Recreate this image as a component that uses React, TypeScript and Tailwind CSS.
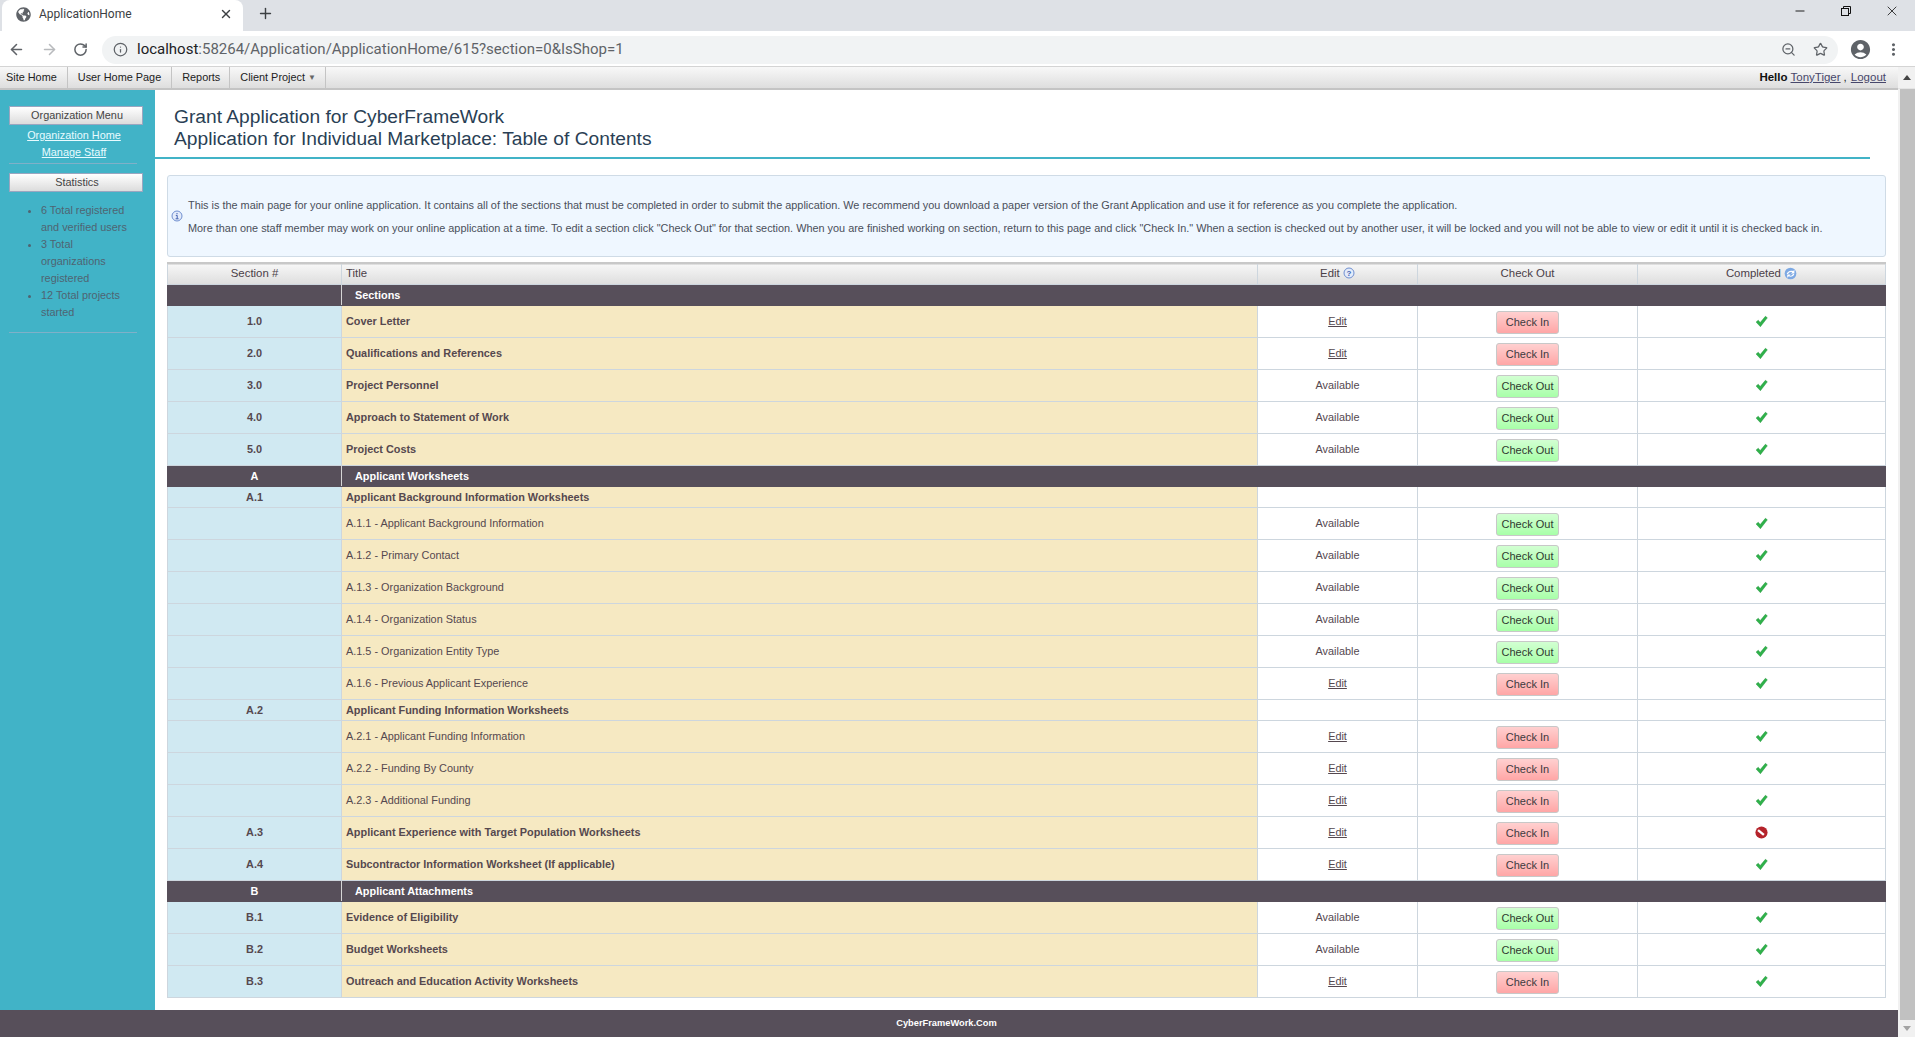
import { ArrowLeft, ArrowRight, Info, Minus, Plus, RotateCw, Star, X, ZoomOut } from "lucide-react"
import { FaGlobeAmericas } from "react-icons/fa"
import { MdAccountCircle, MdMoreVert } from "react-icons/md"

type Row = {
  kind: "dark" | "group" | "bold" | "sub"
  num?: string
  title: string
  state?: "in" | "out"
  done?: boolean
}

const rows: Row[] = [
  { kind: "dark", title: "Sections" },
  { kind: "bold", num: "1.0", title: "Cover Letter", state: "in", done: true },
  { kind: "bold", num: "2.0", title: "Qualifications and References", state: "in", done: true },
  { kind: "bold", num: "3.0", title: "Project Personnel", state: "out", done: true },
  { kind: "bold", num: "4.0", title: "Approach to Statement of Work", state: "out", done: true },
  { kind: "bold", num: "5.0", title: "Project Costs", state: "out", done: true },
  { kind: "dark", num: "A", title: "Applicant Worksheets" },
  { kind: "group", num: "A.1", title: "Applicant Background Information Worksheets" },
  { kind: "sub", title: "A.1.1 - Applicant Background Information", state: "out", done: true },
  { kind: "sub", title: "A.1.2 - Primary Contact", state: "out", done: true },
  { kind: "sub", title: "A.1.3 - Organization Background", state: "out", done: true },
  { kind: "sub", title: "A.1.4 - Organization Status", state: "out", done: true },
  { kind: "sub", title: "A.1.5 - Organization Entity Type", state: "out", done: true },
  { kind: "sub", title: "A.1.6 - Previous Applicant Experience", state: "in", done: true },
  { kind: "group", num: "A.2", title: "Applicant Funding Information Worksheets" },
  { kind: "sub", title: "A.2.1 - Applicant Funding Information", state: "in", done: true },
  { kind: "sub", title: "A.2.2 - Funding By County", state: "in", done: true },
  { kind: "sub", title: "A.2.3 - Additional Funding", state: "in", done: true },
  { kind: "bold", num: "A.3", title: "Applicant Experience with Target Population Worksheets", state: "in", done: false },
  { kind: "bold", num: "A.4", title: "Subcontractor Information Worksheet (If applicable)", state: "in", done: true },
  { kind: "dark", num: "B", title: "Applicant Attachments" },
  { kind: "bold", num: "B.1", title: "Evidence of Eligibility", state: "out", done: true },
  { kind: "bold", num: "B.2", title: "Budget Worksheets", state: "out", done: true },
  { kind: "bold", num: "B.3", title: "Outreach and Education Activity Worksheets", state: "in", done: true },
]

function CheckMark() {
  return (
    <svg viewBox="0 0 12 12" className="mx-auto h-[13px] w-[13px]">
      <path d="M1 6.5 3 4.8 4.8 7 9.6 1.2 11.4 2.6 5 10.8Z" fill="#2fb24a" stroke="#1f8f38" strokeWidth="0.4" />
    </svg>
  )
}

function Blocked() {
  return (
    <svg viewBox="0 0 12 12" className="mx-auto h-[13px] w-[13px]">
      <circle cx="6" cy="6" r="5.6" fill="#b5232b" />
      <path d="M2.8 3.8 8.2 8.2" stroke="#fff" strokeWidth="2.2" />
    </svg>
  )
}

function HelpIcon() {
  return (
    <svg viewBox="0 0 12 12" className="inline-block h-[12px] w-[12px] align-[-2px]">
      <circle cx="6" cy="6" r="5" fill="#e3ebfa" stroke="#6f8fd0" strokeWidth="1" />
      <text x="6" y="9" textAnchor="middle" fontSize="8" fontWeight="700" fill="#3f5fb0" fontFamily="Liberation Sans">?</text>
    </svg>
  )
}

function RefreshIcon() {
  return (
    <svg viewBox="0 0 12 12" className="inline-block h-[13px] w-[13px] align-[-3px]">
      <circle cx="6" cy="6" r="5.4" fill="#7ea9e3" />
      <path d="M2.5 6.5C3 4 6 2.6 8.6 3.8L9.6 2.4V6H6.4L7.6 4.9C6 4.3 4.2 5 3.8 6.5Z" fill="#fff" />
      <path d="M9.5 6.5C9 8.6 6.4 9.6 4.4 8.6L3 10V7H6.2L5 8C6.2 8.4 7.6 8 8.2 6.5Z" fill="#fff" />
    </svg>
  )
}

function ActionButton({ state }: { state: "in" | "out" }) {
  return (
    <button
      className={
        state === "in"
          ? "mt-[2px] h-[23px] w-[63px] rounded-[3px] border border-[#c8c8c8] bg-gradient-to-b from-[#ffd0d0] to-[#ffa6a6] text-[11px] text-[#3d3a40]"
          : "mt-[2px] h-[23px] w-[63px] rounded-[3px] border border-[#c8c8c8] bg-gradient-to-b from-[#d2ffd2] to-[#a8ffa8] text-[11px] text-[#2f3a30]"
      }
    >
      {state === "in" ? "Check In" : "Check Out"}
    </button>
  )
}

function BrowserChrome() {
  return (
    <div className="font-['Roboto',sans-serif]">
      <div className="flex h-[31px] bg-[#dee1e6]">
        <div className="ml-[2px] flex h-[31px] w-[241px] items-center rounded-t-[8px] bg-white pb-[3px] pl-[14px] pr-[10px]">
          <FaGlobeAmericas className="h-[15px] w-[15px] text-[#5f6368]" />
          <span className="ml-[8px] flex-1 text-[12px] text-[#3c4043]">ApplicationHome</span>
          <X className="h-[14px] w-[14px] text-[#3c4043]" strokeWidth={2.4} />
        </div>
        <Plus className="ml-[14px] mt-[5px] h-[17px] w-[17px] text-[#3c4043]" strokeWidth={2} />
        <div className="ml-auto flex">
          <button className="flex h-[22px] w-[46px] items-center justify-center text-[#111]">
            <Minus className="h-[14px] w-[14px]" strokeWidth={1.6} />
          </button>
          <button className="flex h-[22px] w-[46px] items-center justify-center text-[#111]">
            <svg viewBox="0 0 10 10" className="h-[10px] w-[10px]" fill="none" stroke="currentColor" strokeWidth="1">
              <rect x="0.5" y="2.5" width="7" height="7" />
              <path d="M2.5 2.5V.5h7v7h-2" />
            </svg>
          </button>
          <button className="flex h-[22px] w-[46px] items-center justify-center text-[#111]">
            <X className="h-[16px] w-[16px]" strokeWidth={1.2} />
          </button>
        </div>
      </div>
      <div className="flex h-[36px] items-center border-b border-[#d4d4d4] bg-white pt-[2px]">
        <ArrowLeft className="ml-[8px] h-[17px] w-[17px] text-[#5f6368]" strokeWidth={2.2} />
        <ArrowRight className="ml-[16px] h-[17px] w-[17px] text-[#b8babd]" strokeWidth={2.2} />
        <RotateCw className="ml-[15px] h-[15px] w-[15px] text-[#5f6368]" strokeWidth={2.4} />
        <div className="ml-[14px] flex h-[28px] w-[1736px] items-center rounded-full bg-[#f1f3f4] pl-[11px]">
          <Info className="h-[15px] w-[15px] text-[#5f6368]" strokeWidth={2} />
          <span className="ml-[9px] text-[15px] text-[#5f6368]">
            <span className="text-[#202124]">localhost</span>:58264/Application/ApplicationHome/615?section=0&amp;IsShop=1
          </span>
          <ZoomOut className="ml-auto h-[15px] w-[15px] text-[#5f6368]" strokeWidth={2} />
          <Star className="ml-[17px] mr-[10px] h-[15px] w-[15px] text-[#5f6368]" strokeWidth={2} />
        </div>
        <MdAccountCircle className="ml-[11px] h-[23px] w-[23px] text-[#5f6368]" />
        <MdMoreVert className="ml-[12px] h-[19px] w-[19px] text-[#5f6368]" />
      </div>
    </div>
  )
}

function NavBar() {
  return (
    <div className="flex h-[23px] items-stretch border-b-2 border-[#c4c4c4] bg-gradient-to-b from-[#f8f8f8] to-[#dedede] text-[10.88px] text-[#222]">
      <a className="flex items-center border-r border-[#c4c4c4] pl-[6px] pr-[10px]">Site Home</a>
      <a className="flex items-center border-r border-[#c4c4c4] px-[10px]">User Home Page</a>
      <a className="flex items-center border-r border-[#c4c4c4] pl-[10px] pr-[9px]">Reports</a>
      <a className="flex items-center border-r border-[#c4c4c4] pl-[10px] pr-[9px]">
        Client Project <span className="ml-[3px] text-[8px] text-[#666]">▼</span>
      </a>
      <div className="ml-auto flex items-center pr-[12px] text-[11.5px]">
        <span className="font-bold text-[#111]">Hello</span>
        <a className="ml-[3px] text-[#47476b] underline">TonyTiger</a>
        <span className="ml-[3px] mr-[4px]">,</span>
        <a className="text-[#47476b] underline">Logout</a>
      </div>
    </div>
  )
}

function Sidebar() {
  const boxBtn =
    "mx-[9px] flex h-[19px] w-[134px] items-center justify-center border border-[#9aa6c0] bg-gradient-to-b from-white to-[#dcdcdc] pl-[2px] text-[10.88px] text-[#444]"
  return (
    <aside className="w-[155px] shrink-0 bg-[#41b3c7] pt-[16px] text-[10.88px]">
      <div className={boxBtn}>Organization Menu</div>
      <div className="mx-[9px] w-[128px] border-b border-[#7fb0c8] pb-[2px] pl-[2px] pt-[2px] text-center font-medium leading-[17px] text-[#e8fbff]">
        <a className="block underline">Organization Home</a>
        <a className="block underline">Manage Staff</a>
      </div>
      <div className={`${boxBtn} mt-[9px]`}>Statistics</div>
      <ul className="mx-[9px] mt-[10px] w-[128px] list-disc border-b border-[#7fb0c8] pb-[11px] pl-[32px] leading-[17px] text-[#4f6472] marker:text-[#4f6472]">
        <li>6 Total registered and verified users</li>
        <li>3 Total organizations registered</li>
        <li>12 Total projects started</li>
      </ul>
    </aside>
  )
}

function SectionTable() {
  const cell = "border border-[#cdd6de]"
  return (
    <table className="mt-[5px] w-[1719px] table-fixed border-collapse text-[10.88px] text-[#55484f]">
      <colgroup>
        <col className="w-[174px]" />
        <col className="w-[916px]" />
        <col className="w-[160px]" />
        <col className="w-[220px]" />
        <col />
      </colgroup>
      <thead>
        <tr className="h-[21px] border-t-2 border-[#c8c8c8] bg-gradient-to-b from-[#f6f6f6] to-[#dedede] text-[11.4px] text-[#4a4048]">
          <th className={`${cell} text-center font-normal`}>Section #</th>
          <th className={`${cell} pl-[4px] text-left font-normal`}>Title</th>
          <th className={`${cell} text-center font-normal`}>
            Edit <HelpIcon />
          </th>
          <th className={`${cell} text-center font-normal`}>Check Out</th>
          <th className={`${cell} text-center font-normal`}>
            Completed <RefreshIcon />
          </th>
        </tr>
      </thead>
      <tbody>
        {rows.map((r) => {
          if (r.kind === "dark") {
            return (
              <tr key={r.title} className="h-[21px] bg-[#574f5a] font-bold text-white">
                <td className="border border-[#574f5a] border-r-[#d5d5d5] pt-[1px] text-center">{r.num}</td>
                <td colSpan={4} className="border border-[#574f5a] pl-[13px] pt-[1px]">
                  {r.title}
                </td>
              </tr>
            )
          }
          const isGroup = r.kind === "group"
          return (
            <tr key={r.title} className={isGroup ? "h-[21px]" : "h-[32px]"}>
              <td className={`${cell} bg-[#d0e9f2] text-center font-bold ${isGroup ? "pt-[1px]" : ""}`}>{r.num}</td>
              <td className={`${cell} bg-[#f6e9c2] pl-[4px] ${r.kind === "sub" ? "font-normal" : "font-bold"} ${isGroup ? "pt-[1px]" : ""}`}>{r.title}</td>
              <td className={`${cell} text-center`}>
                {r.state === "in" && <a className="underline">Edit</a>}
                {r.state === "out" && "Available"}
              </td>
              <td className={`${cell} text-center`}>{r.state && <ActionButton state={r.state} />}</td>
              <td className={cell}>{r.state && (r.done ? <CheckMark /> : <Blocked />)}</td>
            </tr>
          )
        })}
      </tbody>
    </table>
  )
}

export default function App() {
  return (
    <div className="flex h-screen w-full flex-col overflow-hidden bg-white font-['Liberation_Sans',Arial,sans-serif]">
      <BrowserChrome />
      <div className="flex min-h-0 flex-1">
        <div className="flex min-w-0 flex-1 flex-col">
          <NavBar />
          <div className="flex min-h-0 flex-1">
            <Sidebar />
            <main className="min-w-0 flex-1">
              <div className="mr-[28px] border-b-2 border-[#41b3c7] pb-[7px] pl-[19px] pt-[16px] text-[19.2px] leading-[22px] text-[#2a3f55]">
                <div>Grant Application for CyberFrameWork</div>
                <div>Application for Individual Marketplace: Table of Contents</div>
              </div>
              <div className="ml-[12px] mt-[16px] flex h-[82px] w-[1719px] items-center rounded-[3px] border border-[#cfdbe6] bg-[#eff7ff] pl-[3px] text-[10.88px] text-[#4a4f5a]">
                <svg viewBox="0 0 12 12" className="h-[12px] w-[12px] shrink-0">
                  <circle cx="6" cy="6" r="5" fill="#e3ebfa" stroke="#6f8fd0" strokeWidth="1" />
                  <path d="M6 3v1.2M4.8 5.4H6.2V8.6M4.6 8.8h3" stroke="#3f5fb0" strokeWidth="1" fill="none" />
                </svg>
                <div className="ml-[5px] mt-[2px] leading-[23px]">
                  <p>
                    This is the main page for your online application. It contains all of the sections that must be completed in order to submit the application. We recommend you download a paper version of the Grant Application and use it for reference as you complete the application.
                  </p>
                  <p>
                    More than one staff member may work on your online application at a time. To edit a section click "Check Out" for that section. When you are finished working on section, return to this page and click "Check In." When a section is checked out by another user, it will be locked and you will not be able to view or edit it until it is checked back in.
                  </p>
                </div>
              </div>
              <div className="ml-[12px]">
                <SectionTable />
              </div>
            </main>
          </div>
          <footer className="flex h-[27px] items-center justify-center bg-[#574f5a] pr-[5px] pt-[1px] text-[9.3px] font-bold text-white">
            CyberFrameWork.Com
          </footer>
        </div>
        <div className="flex w-[17px] shrink-0 flex-col bg-[#f1f1f1]">
          <div className="flex h-[22px] items-center justify-center border-b border-[#e4e4e4] text-[#444]">
            <svg viewBox="0 0 8 5" className="h-[5px] w-[8px]"><path d="M4 0 8 5H0Z" fill="currentColor" /></svg>
          </div>
          <div className="ml-[2px] flex-1 bg-[#c1c1c1]" />
          <div className="flex h-[17px] items-center justify-center text-[#a3a3a3]">
            <svg viewBox="0 0 8 5" className="h-[5px] w-[8px]"><path d="M0 0H8L4 5Z" fill="currentColor" /></svg>
          </div>
        </div>
      </div>
    </div>
  )
}
